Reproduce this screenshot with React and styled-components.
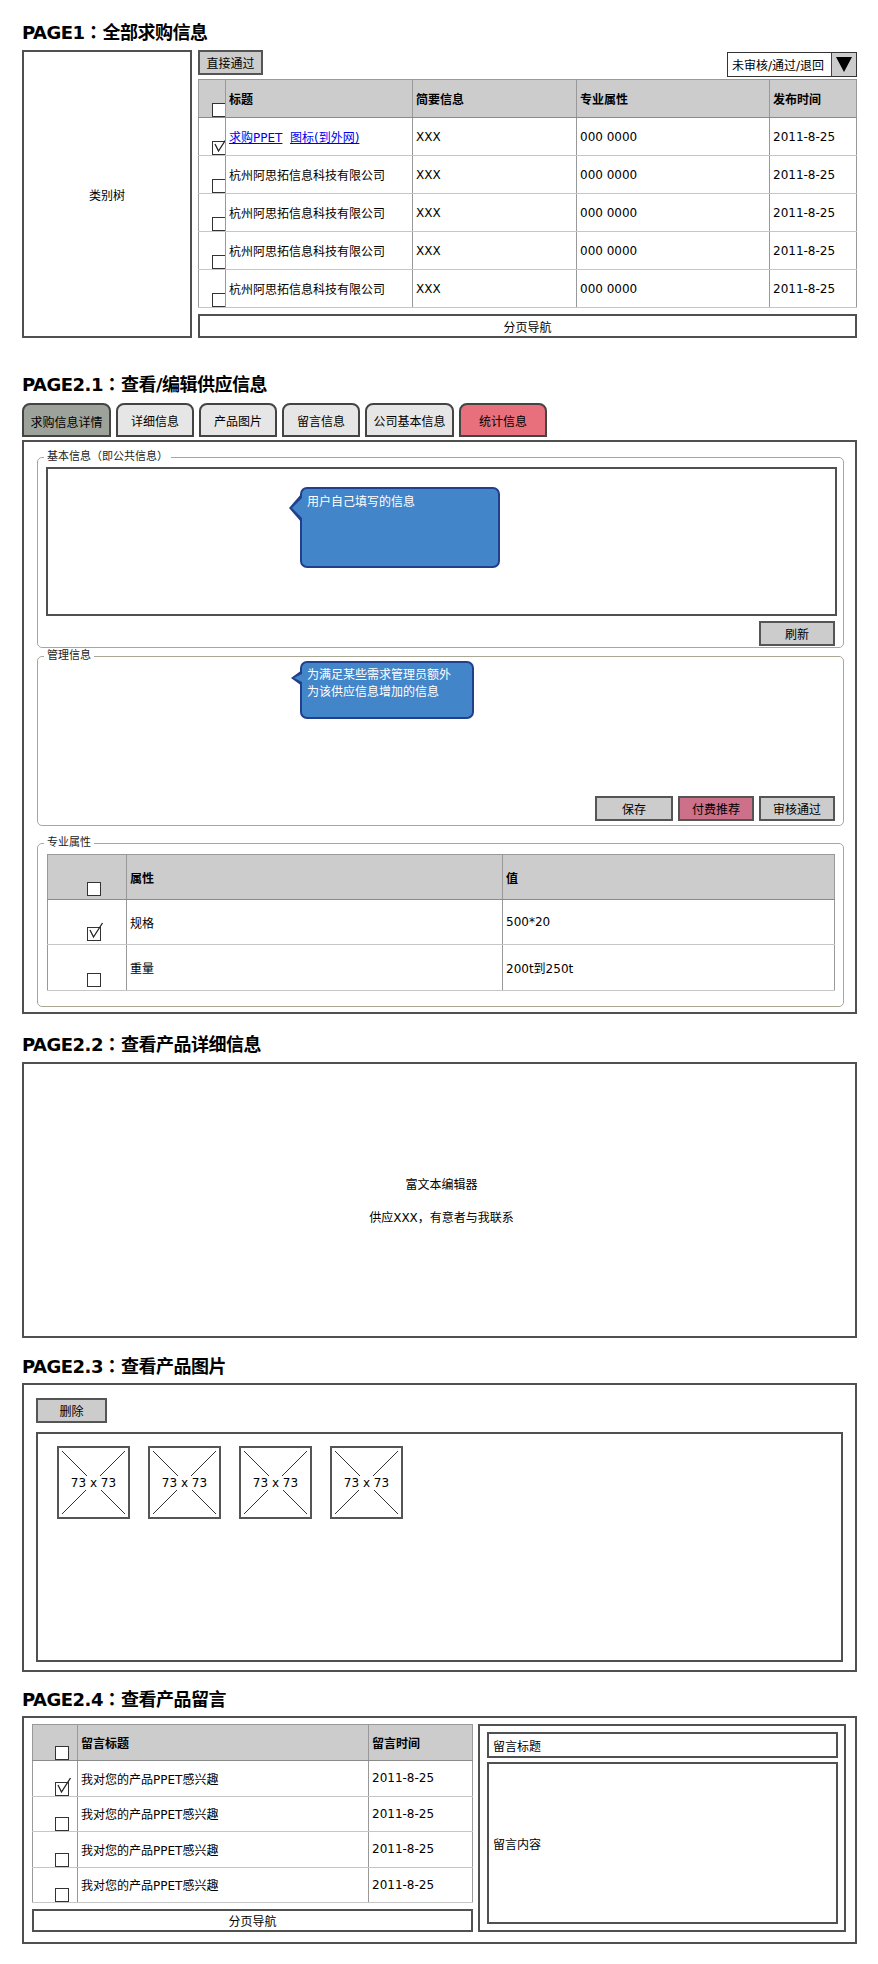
import React from 'react'
import styled, { createGlobalStyle } from 'styled-components'

const GlobalStyle = createGlobalStyle`
  * { box-sizing: border-box; }
  body {
    margin: 0;
    background: #fff;
    color: #000;
    font-family: "DejaVu Sans", "Noto Sans CJK SC", sans-serif;
    font-size: 12px;
  }
`

const Page = styled.div`
  width: 878px;
  padding: 19px 21px 20px 22px;
`

const Section = styled.section`
  margin-top: ${p => p.$top || 0}px;
`

const Title = styled.h2`
  margin: 0 0 ${p => p.$gap}px;
  height: 24px;
  font-size: 18px;
  line-height: 24px;
  font-weight: bold;
  letter-spacing: -0.5px;
  white-space: nowrap;
`

// full-width colon centred in its cell, as in the mockup
const Colon = styled.span`
  font-family: "Noto Sans CJK TC", "Noto Sans CJK SC", sans-serif;
  letter-spacing: 0;
`

const Frame = styled.div`
  border: 2px solid #505050;
  background: #fff;
`

const Button = styled.div`
  width: ${p => p.$w}px;
  height: 25px;
  flex: none;
  background: ${p => p.$bg || '#cccccc'};
  border: 2px solid #555;
  display: flex;
  align-items: center;
  justify-content: center;
`

const ButtonRow = styled.div`
  display: flex;
  justify-content: flex-end;
  gap: 5px;
  margin-top: ${p => p.$mt}px;
  padding-right: 2px;
`

const Pager = styled(Frame)`
  height: ${p => p.$h}px;
  margin-top: 6px;
  display: flex;
  align-items: center;
  justify-content: center;
`

/* ---------- tables ---------- */

const Grid = styled.table`
  width: 100%;
  border-collapse: collapse;
  table-layout: fixed;
  border: 1px solid #999;
`

const Row = styled.tr`
  height: ${p => p.$h}px;
`

const Cell = styled.td`
  width: ${p => (p.$w ? `${p.$w}px` : 'auto')};
  padding: ${p => (p.$check ? `0 0 ${p.$pb || 0}px 0` : '0 0 0 3px')};
  vertical-align: ${p => (p.$check ? 'bottom' : 'middle')};
  background: ${p => (p.$head ? '#cccccc' : '#fff')};
  font-weight: ${p => (p.$head ? 'bold' : 'normal')};
  border-left: 1px solid #999;
  border-bottom: 1px solid ${p => (p.$head ? '#8a8a8a' : '#c6c6c6')};
  white-space: nowrap;
  overflow: hidden;
`

const CheckSlot = styled.div`
  padding-left: 50%;
  line-height: 0;
`

const Box = styled.span`
  position: relative;
  display: inline-block;
  width: 14px;
  height: 14px;
  border: 1.5px solid #333;
  background: #fff;
`

const Tick = styled.svg`
  position: absolute;
  left: 0;
  top: -6px;
  overflow: visible;
`

function Checkbox({ checked }) {
  return (
    <Box>
      {checked && (
        <Tick width="17" height="19" viewBox="0 0 17 19">
          <polyline points="2,8 5.5,15 14.5,1" fill="none" stroke="#222" strokeWidth="1.3" />
        </Tick>
      )}
    </Box>
  )
}

const Link = styled.a`
  color: #0000ee;
  text-decoration: underline;
`

/* ---------- page 1 ---------- */

const ListLayout = styled.div`
  display: flex;
  gap: 6px;
  height: 288px;
`

const TreeBox = styled(Frame)`
  width: 170px;
  display: flex;
  align-items: center;
  justify-content: center;
`

const ListMain = styled.div`
  flex: 1;
  display: flex;
  flex-direction: column;
`

const Toolbar = styled.div`
  height: 30px;
  display: flex;
  justify-content: space-between;
  align-items: flex-start;
`

const Select = styled.div`
  margin-top: 2px;
  width: 130px;
  height: 25px;
  display: flex;
  border: 1.5px solid #333;
  background: #fff;
`

const SelectText = styled.div`
  flex: 1;
  padding-left: 4px;
  display: flex;
  align-items: center;
`

const SelectArrow = styled.div`
  width: 25px;
  background: #cccccc;
  border-left: 1.5px solid #444;
  display: flex;
  align-items: center;
  justify-content: center;
`

/* ---------- page 2.1 ---------- */

const TabBar = styled.div`
  display: flex;
  gap: 5px;
  height: 34px;
  margin-bottom: 3px;
`

const Tab = styled.div`
  width: ${p => p.$w}px;
  background: ${p => p.$bg};
  border: 2px solid #444;
  border-radius: 8px 8px 0 0;
  display: flex;
  align-items: center;
  justify-content: center;
  padding-top: ${p => (p.$active ? 3 : 0)}px;
`

const Panel = styled(Frame)`
  padding: 8px 11px 5px 13px;
`

const Group = styled.fieldset`
  margin: ${p => p.$mt || 0}px 0 0;
  padding: ${p => p.$pt || 0}px 6px ${p => p.$pb}px 8px;
  border: 1px solid #aba796;
  border-radius: 5px;
  min-width: 0;
`

const Legend = styled.legend`
  font-size: 11px;
  line-height: 14px;
  color: #222;
  padding: 0 3px;
  margin-left: -2px;
`

const InputArea = styled(Frame)`
  height: 149px;
  padding: 18px 0 0 252px;
`

const Callout = styled.div`
  position: relative;
  width: ${p => p.$w}px;
  height: ${p => p.$h}px;
  margin: ${p => p.$mt || 0}px 0 0 ${p => p.$ml || 0}px;
  padding: ${p => p.$pad};
  background: #4385c9;
  border: 2px solid #213f8c;
  border-radius: 7px;
  color: #fff;
  line-height: 17px;

  &::before {
    content: '';
    position: absolute;
    left: -${p => p.$tip}px;
    top: ${p => p.$py}px;
    border-style: solid;
    border-color: transparent #213f8c transparent transparent;
    border-width: ${p => p.$half}px ${p => p.$tip}px ${p => p.$half}px 0;
  }

  &::after {
    content: '';
    position: absolute;
    left: -${p => p.$tip - 3}px;
    top: ${p => p.$py + 3}px;
    border-style: solid;
    border-color: transparent #4385c9 transparent transparent;
    border-width: ${p => p.$half - 3}px ${p => p.$tip - 1}px ${p => p.$half - 3}px 0;
  }
`

const TableWrap = styled.div`
  margin: 4px 2px 0 1px;
`

/* ---------- page 2.2 ---------- */

const EditorBox = styled(Frame)`
  height: 276px;
  display: flex;
  flex-direction: column;
  align-items: center;
  justify-content: center;
  gap: 16px;
  padding-left: 4px;
`

/* ---------- page 2.3 ---------- */

const GalleryFrame = styled(Frame)`
  height: 289px;
  padding: 13px 12px 0 12px;
`

const Gallery = styled(Frame)`
  height: 230px;
  margin-top: 9px;
  padding: 12px 0 0 19px;
  display: flex;
  align-items: flex-start;
  gap: 18px;
`

const Thumb = styled.div`
  position: relative;
  width: 73px;
  height: 73px;
  border: 2px solid #555;
  display: flex;
  align-items: center;
  justify-content: center;
`

const ThumbLines = styled.svg`
  position: absolute;
  inset: 0;
`

const ThumbLabel = styled.span`
  position: relative;
  background: #fff;
  padding: 0 1px;
  line-height: 14px;
`

/* ---------- page 2.4 ---------- */

const CommentFrame = styled(Frame)`
  padding: 6px 9px 0 8px;
  height: 228px;
  display: flex;
  align-items: flex-start;
  gap: 5px;
`

const CommentList = styled.div`
  width: 441px;
  flex: none;
`

const CommentView = styled(Frame)`
  flex: 1;
  height: 208px;
  padding: 6px 6px 6px 7px;
  display: flex;
  flex-direction: column;
  gap: 4px;
`

const Field = styled(Frame)`
  height: ${p => (p.$grow ? 'auto' : '26px')};
  flex: ${p => (p.$grow ? 1 : 'none')};
  display: flex;
  align-items: center;
  padding-left: 4px;
`

const tabs = [
  { label: '求购信息详情', w: 89, bg: '#9da39a', active: true },
  { label: '详细信息', w: 78, bg: '#e6e6e6' },
  { label: '产品图片', w: 78, bg: '#e6e6e6' },
  { label: '留言信息', w: 78, bg: '#e6e6e6' },
  { label: '公司基本信息', w: 89, bg: '#e6e6e6' },
  { label: '统计信息', w: 88, bg: '#e8707c' },
]

const company = '杭州阿思拓信息科技有限公司'

function PageTitle({ code, name, gap }) {
  return (
    <Title $gap={gap}>
      {code}<Colon>：</Colon>{name}
    </Title>
  )
}

export default function App() {
  return (
    <Page>
      <GlobalStyle />

      <Section>
        <PageTitle gap={7} code="PAGE1" name="全部求购信息" />
        <ListLayout>
          <TreeBox>类别树</TreeBox>
          <ListMain>
            <Toolbar>
              <Button $w={65}>直接通过</Button>
              <Select>
                <SelectText>未审核/通过/退回</SelectText>
                <SelectArrow>
                  <svg width="16" height="15" viewBox="0 0 16 15">
                    <polygon points="0,0 16,0 8,15" fill="#000" />
                  </svg>
                </SelectArrow>
              </Select>
            </Toolbar>
            <Grid>
              <tbody>
                <Row $h={38}>
                  <Cell $head $check $w={27}><CheckSlot><Checkbox /></CheckSlot></Cell>
                  <Cell $head $w={187}>标题</Cell>
                  <Cell $head $w={164}>简要信息</Cell>
                  <Cell $head $w={193}>专业属性</Cell>
                  <Cell $head>发布时间</Cell>
                </Row>
                {[0, 1, 2, 3, 4].map(i => (
                  <Row key={i} $h={38}>
                    <Cell $check><CheckSlot><Checkbox checked={i === 0} /></CheckSlot></Cell>
                    <Cell>
                      {i === 0 ? (
                        <>
                          {' '}<Link>求购PPET</Link>{'\u00a0\u00a0'}<Link>图标(到外网)</Link>
                        </>
                      ) : company}
                    </Cell>
                    <Cell>XXX</Cell>
                    <Cell>000 0000</Cell>
                    <Cell>2011-8-25</Cell>
                  </Row>
                ))}
              </tbody>
            </Grid>
            <Pager $h={24}>分页导航</Pager>
          </ListMain>
        </ListLayout>
      </Section>

      <Section $top={33}>
        <PageTitle gap={8} code="PAGE2.1" name="查看/编辑供应信息" />
        <TabBar>
          {tabs.map(t => (
            <Tab key={t.label} $w={t.w} $bg={t.bg} $active={t.active}>{t.label}</Tab>
          ))}
        </TabBar>
        <Panel>
          <Group $pt={3} $pb={1}>
            <Legend>基本信息（即公共信息）</Legend>
            <InputArea>
              <Callout $w={200} $h={81} $pad="5px 5px" $tip={13} $half={15} $py={4}>
                用户自己填写的信息
              </Callout>
            </InputArea>
            <ButtonRow $mt={5}>
              <Button $w={76}>刷新</Button>
            </ButtonRow>
          </Group>

          <Group $mt={1} $pb={4}>
            <Legend>管理信息</Legend>
            <Callout $w={174} $h={58} $mt={-2} $ml={254} $pad="4px 5px" $tip={11} $half={8} $py={7}>
              为满足某些需求管理员额外<br />为该供应信息增加的信息
            </Callout>
            <ButtonRow $mt={77}>
              <Button $w={78}>保存</Button>
              <Button $w={76} $bg="#cc7189">付费推荐</Button>
              <Button $w={76}>审核通过</Button>
            </ButtonRow>
          </Group>

          <Group $mt={10} $pb={15}>
            <Legend>专业属性</Legend>
            <TableWrap>
              <Grid>
                <tbody>
                  <Row $h={45}>
                    <Cell $head $check $pb={3} $w={79}><CheckSlot><Checkbox /></CheckSlot></Cell>
                    <Cell $head $w={376}>属性</Cell>
                    <Cell $head>值</Cell>
                  </Row>
                  <Row $h={45}>
                    <Cell $check $pb={3}><CheckSlot><Checkbox checked /></CheckSlot></Cell>
                    <Cell>规格</Cell>
                    <Cell>500*20</Cell>
                  </Row>
                  <Row $h={46}>
                    <Cell $check $pb={3}><CheckSlot><Checkbox /></CheckSlot></Cell>
                    <Cell>重量</Cell>
                    <Cell>200t到250t</Cell>
                  </Row>
                </tbody>
              </Grid>
            </TableWrap>
          </Group>
        </Panel>
      </Section>

      <Section $top={17}>
        <PageTitle gap={7} code="PAGE2.2" name="查看产品详细信息" />
        <EditorBox>
          <div>富文本编辑器</div>
          <div>供应XXX，有意者与我联系</div>
        </EditorBox>
      </Section>

      <Section $top={15}>
        <PageTitle gap={6} code="PAGE2.3" name="查看产品图片" />
        <GalleryFrame>
          <Button $w={71}>删除</Button>
          <Gallery>
            {[0, 1, 2, 3].map(i => (
              <Thumb key={i}>
                <ThumbLines width="69" height="69" viewBox="0 0 69 69">
                  <line x1="3" y1="3" x2="66" y2="66" stroke="#333" strokeWidth="1" />
                  <line x1="66" y1="3" x2="3" y2="66" stroke="#333" strokeWidth="1" />
                </ThumbLines>
                <ThumbLabel>73 x 73</ThumbLabel>
              </Thumb>
            ))}
          </Gallery>
        </GalleryFrame>
      </Section>

      <Section $top={14}>
        <PageTitle gap={6} code="PAGE2.4" name="查看产品留言" />
        <CommentFrame>
          <CommentList>
            <Grid>
              <tbody>
                <Row $h={36}>
                  <Cell $head $check $w={45}><CheckSlot><Checkbox /></CheckSlot></Cell>
                  <Cell $head $w={291}>留言标题</Cell>
                  <Cell $head>留言时间</Cell>
                </Row>
                {[0, 1, 2, 3].map(i => (
                  <Row key={i} $h={35.5}>
                    <Cell $check><CheckSlot><Checkbox checked={i === 0} /></CheckSlot></Cell>
                    <Cell>我对您的产品PPET感兴趣</Cell>
                    <Cell>2011-8-25</Cell>
                  </Row>
                ))}
              </tbody>
            </Grid>
            <Pager $h={23}>分页导航</Pager>
          </CommentList>
          <CommentView>
            <Field>留言标题</Field>
            <Field $grow>留言内容</Field>
          </CommentView>
        </CommentFrame>
      </Section>
    </Page>
  )
}
